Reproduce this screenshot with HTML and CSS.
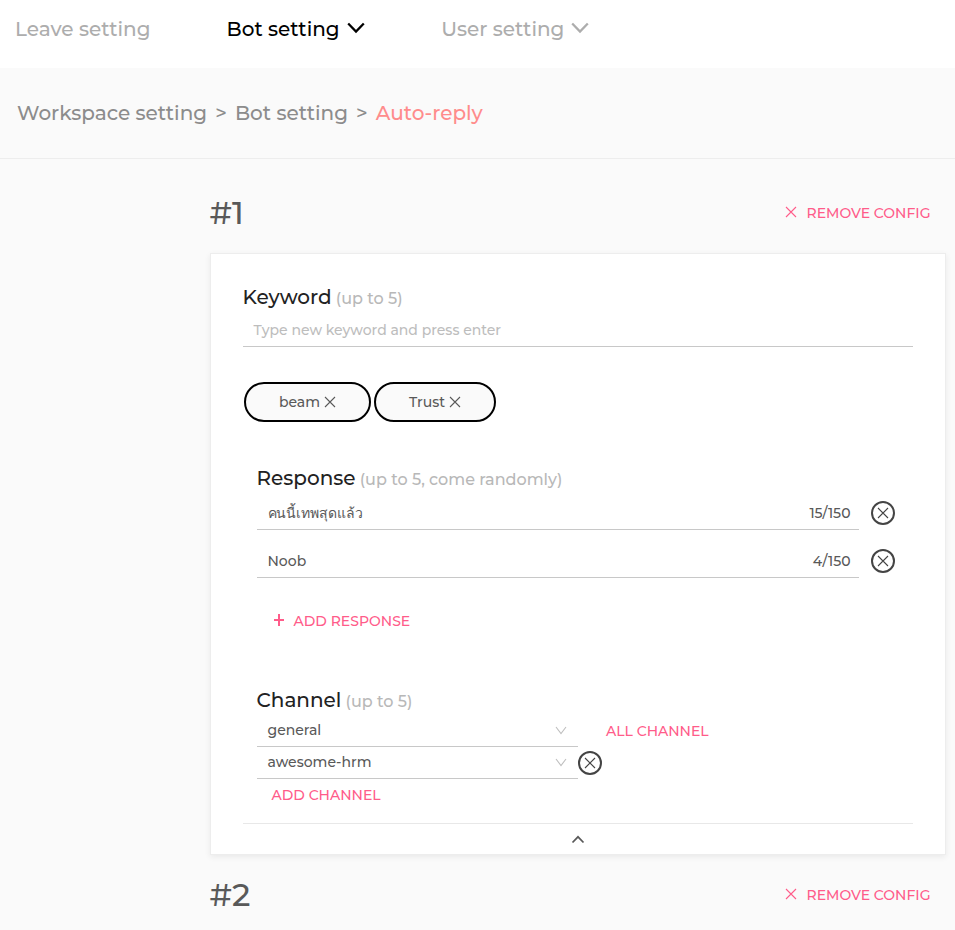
FILE: index.html
```html
<!DOCTYPE html>
<html lang="en">
<head>
<meta charset="utf-8">
<title>Auto-reply</title>
<link rel="stylesheet" href="styles.css">
</head>
<body>
<svg class="defs" width="0" height="0">
  <symbol id="x" viewBox="0 0 12 12"><path d="M1 1 11 11M11 1 1 11"/></symbol>
  <symbol id="down" viewBox="0 0 18 12"><path d="M1.2 1.5 9 9.5 16.8 1.5"/></symbol>
  <symbol id="thin-down" viewBox="0 0 12 9"><path d="M1 1 6 7.5 11 1"/></symbol>
</svg>
<nav class="nav">
  <a class="nav-leave"><span class="t">Leave setting</span></a>
  <a class="nav-bot"><span class="t">Bot setting</span><svg class="caret"><use href="#down"/></svg></a>
  <a class="nav-user"><span class="t">User setting</span><svg class="caret"><use href="#down"/></svg></a>
</nav>
<div class="crumbs">
  <span class="t">Workspace setting</span><span class="t c-sep">&gt;</span><span class="t">Bot setting</span><span class="t c-sep">&gt;</span><span class="t c-current">Auto-reply</span>
</div>
<main>
  <header class="config-head">
    <h2>#1</h2>
    <button class="link remove"><svg class="x"><use href="#x"/></svg><span class="t">REMOVE CONFIG</span></button>
  </header>
  <section class="card">
    <div class="label"><span class="t">Keyword</span><small class="t">(up to 5)</small></div>
    <div class="field keyword-field"><span class="t">Type new keyword and press enter</span></div>
    <div class="tags">
      <div class="tag tag-beam"><span class="t">beam</span><svg class="x"><use href="#x"/></svg></div>
      <div class="tag tag-trust"><span class="t">Trust</span><svg class="x"><use href="#x"/></svg></div>
    </div>
    <div class="group responses">
      <div class="label"><span class="t">Response</span><small class="t">(up to 5, come randomly)</small></div>
      <div class="response"><div class="field"><span class="t thai">คนนี้เทพสุดแล้ว</span><span class="t">15/150</span></div><button class="round"><svg class="x"><use href="#x"/></svg></button></div>
      <div class="response"><div class="field"><span class="t">Noob</span><span class="t">4/150</span></div><button class="round"><svg class="x"><use href="#x"/></svg></button></div>
      <button class="link add-response"><svg class="plus" viewBox="0 0 12 12"><path d="M6 0V12M1 6H11"/></svg><span class="t">ADD RESPONSE</span></button>
    </div>
    <div class="group channels">
      <div class="label"><span class="t">Channel</span><small class="t">(up to 5)</small></div>
      <div class="channel"><div class="field"><span class="t">general</span><svg class="thin"><use href="#thin-down"/></svg></div><button class="link all"><span class="t">ALL CHANNEL</span></button></div>
      <div class="channel"><div class="field"><span class="t">awesome-hrm</span><svg class="thin"><use href="#thin-down"/></svg></div><button class="round"><svg class="x"><use href="#x"/></svg></button></div>
      <button class="link add-channel"><span class="t">ADD CHANNEL</span></button>
    </div>
    <div class="collapse"><svg viewBox="0 0 14 9"><path d="M1.5 7.5 7 1.8 12.5 7.5"/></svg></div>
  </section>
  <header class="config-head second">
    <h2>#2</h2>
    <button class="link remove"><svg class="x"><use href="#x"/></svg><span class="t">REMOVE CONFIG</span></button>
  </header>
</main>
</body>
</html>
```
FILE: styles.css
```css
* { box-sizing: border-box; }
body {
  margin: 0; height: 930px; overflow: hidden; background: #fafafa; color: #595959;
  font: 500 14px/20px Montserrat, Inter, "Noto Sans", sans-serif;
}
button { border: 0; padding: 0; background: none; color: inherit; font: inherit; }
svg { fill: none; stroke: currentColor; flex: none; display: block; }
.defs { position: absolute; }
.t { white-space: nowrap; }
.nav { height: 68px; padding-left: 15px; background: #fff; color: #adadad; display: flex; font-size: 20px; }
.nav a { display: flex; align-items: center; height: 58px; }
.nav-leave { width: 211.6px; }
.nav-bot { width: 214.6px; color: #000; }
.caret { width: 18px; height: 12px; margin: -2px 0 0 7px; stroke-width: 2.3; }
.crumbs { height: 91px; border-bottom: 1px solid #ededed; padding-left: 17px; display: flex; align-items: center; color: #8c8c8c; font-size: 20px; }
.c-sep { width: 27.8px; text-align: center; font-size: 20px; }
.c-current { color: #ff8c8c; }
main { padding: 0 9px 0 210px; }
.config-head { height: 94px; padding: 0 15.5px 0 0; display: flex; align-items: center; justify-content: space-between; }
.config-head h2 { margin: 14px 0 0 -0.5px; font-weight: 500; font-size: 32px; line-height: 40px; }
.link { display: flex; align-items: center; color: #ff5c8a; font-size: 14px; }
.remove { margin-top: 14px; gap: 9.5px; }
.x { width: 12px; height: 12px; stroke-width: 1.1; }
.remove .x { margin-top: -2px; }
.card { height: 602px; background: #fff; border: 1px solid #ededed; padding: 29px 32px 0; box-shadow: 0 2px 6px rgba(0,0,0,.07); }
.label { height: 28px; margin-left: -0.5px; display: flex; align-items: baseline; line-height: 28px; font-size: 20px; color: #222; gap: 4.2px; }
.label small { font-size: 16px; color: #b8b8b8; }
.field { height: 34px; border-bottom: 1px solid #c8c8c8; padding: 0 8.5px 0 10.5px; display: flex; align-items: center; justify-content: space-between; }
.keyword-field { height: 36px; padding-top: 2px; color: #bdbdbd; }
.tags { margin: 35px 0 0 1px; display: flex; gap: 3px; }
.tag { height: 40px; border: 2px solid #000; border-radius: 20px; background: #fafafa; display: flex; align-items: center; justify-content: center; gap: 4px; }
.tag-beam { width: 127px; }
.tag-trust { width: 122px; }
.group { margin-left: 14px; }
.responses { margin-top: 42px; }
.response { display: flex; align-items: center; gap: 12px; height: 34px; margin: 4px 0 14px; }
.response + .response { margin-top: 0; }
.response .field { width: 602px; }
.thai { font-weight: 400; letter-spacing: -0.1px; }
.round { width: 24px; height: 24px; border: 2px solid #444; border-radius: 50%; display: flex; align-items: center; justify-content: center; color: #444; }
.add-response { margin: 33px 0 0 16px; gap: 8.5px; }
.plus { width: 12px; height: 12px; stroke-width: 2; margin-top: -2px; }
.channels { margin-top: 55px; }
.channels .label { height: 29px; }
.channel { height: 32px; display: flex; align-items: center; }
.channel .field { width: 321px; height: 32px; padding-right: 11px; padding-bottom: 1px; }
.thin { width: 12px; height: 9px; color: #bfbfbf; stroke-width: 1.1; }
.all { margin-left: 28px; }
.add-channel { margin: 6px 0 0 14.5px; }
.collapse { border-top: 1px solid #e8e8e8; margin-top: 18px; height: 31px; display: flex; align-items: center; justify-content: center; }
.collapse svg { width: 14px; height: 9px; stroke-width: 1.7; }
.second { height: 80px; }
.second h2 { margin: 0 0 0 -0.5px; }
.second .remove { margin-top: 0; }
```
